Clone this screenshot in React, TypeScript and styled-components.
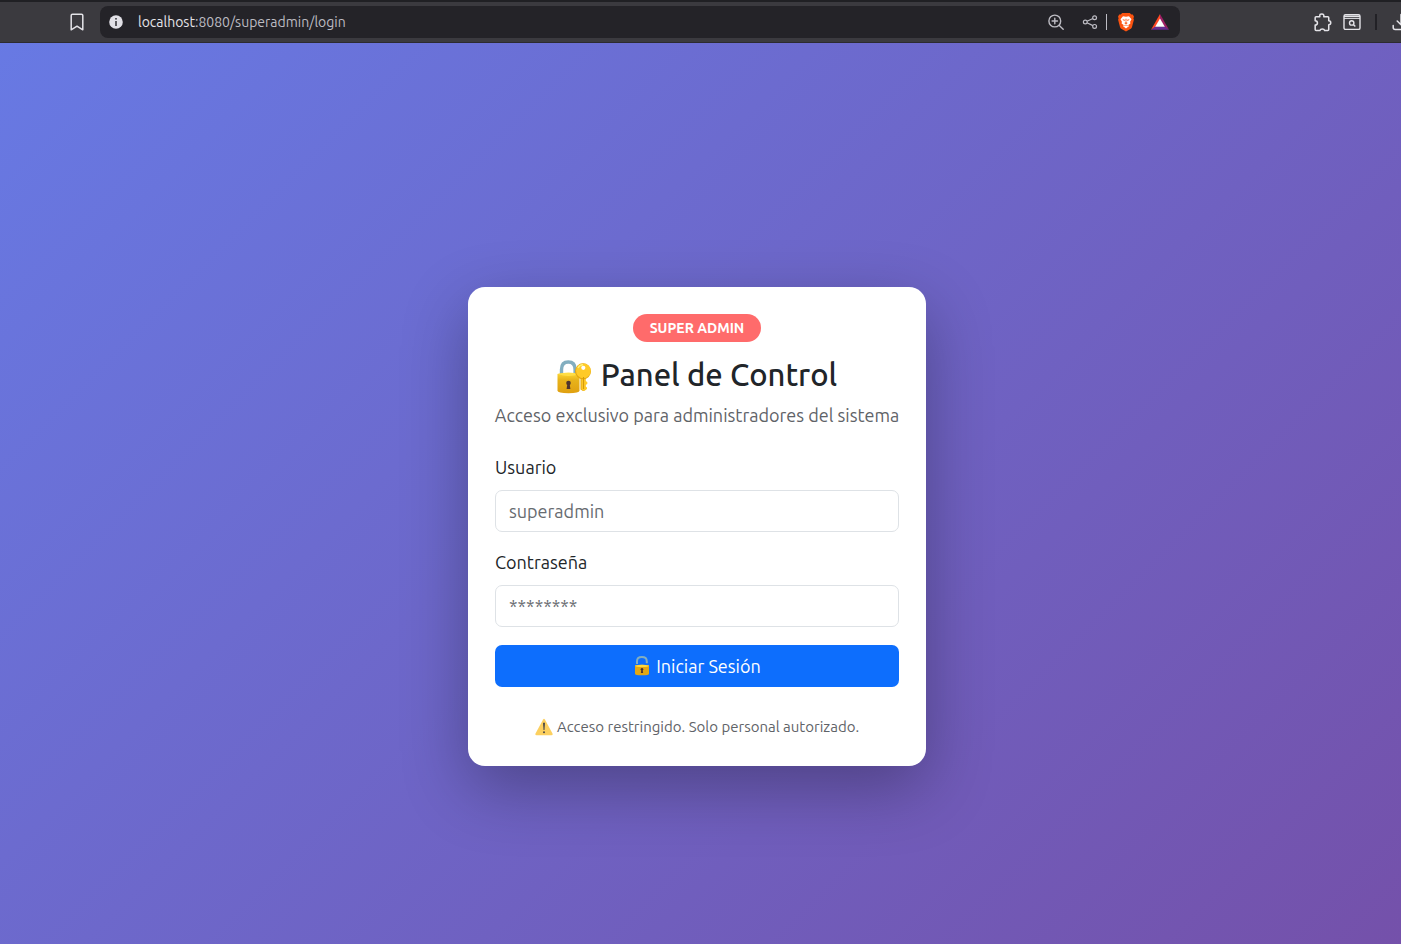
import React from "react";
import styled, { createGlobalStyle } from "styled-components";

const GlobalStyle = createGlobalStyle`
  *, *::before, *::after { box-sizing: border-box; }
  body {
    margin: 0;
    font-family: Ubuntu, "Noto Sans", "Open Sans", sans-serif;
    color: #212529;
  }
`;

const Window = styled.div`
  display: flex;
  flex-direction: column;
  min-height: 100vh;
  overflow: hidden;
`;

const Toolbar = styled.header`
  display: flex;
  align-items: center;
  height: 43px;
  padding-left: 68px;
  border-top: 2px solid #202024;
  border-bottom: 1px solid #2c2b30;
  background: #3b3a3f;
  color: #e4e3e8;
  overflow: hidden;
`;

const IconButton = styled.button<{ $width?: number }>`
  display: flex;
  flex: none;
  align-items: center;
  justify-content: center;
  width: ${(p) => p.$width ?? 18}px;
  height: 20px;
  padding: 0;
  border: 0;
  background: none;
  color: inherit;
  cursor: pointer;

  svg { display: block; flex: none; }
`;

const AddressBar = styled.div`
  display: flex;
  flex: 1;
  align-items: center;
  min-width: 0;
  height: 32px;
  margin-left: 14px;
  padding: 0 11px 0 8px;
  border-radius: 8px;
  background: #242328;
`;

const Url = styled.div`
  flex: 1;
  min-width: 0;
  margin-left: 13px;
  overflow: hidden;
  white-space: nowrap;
  font-size: 14px;
  line-height: 20px;
  color: #bdbcc3;
`;

const Host = styled.span`
  color: #e4e3e8;
`;

const AddressActions = styled.div`
  display: flex;
  align-items: center;
  color: #bdbcc3;
`;

const Gap = styled.span<{ $size: number }>`
  flex: none;
  width: ${(p) => p.$size}px;
`;

const Divider = styled.span<{ $color: string; $width: number }>`
  flex: none;
  width: ${(p) => p.$width}px;
  height: 16px;
  background: ${(p) => p.$color};
`;

const Extensions = styled.div`
  display: flex;
  flex: none;
  align-items: center;
  width: 87px;
  margin-left: 134px;
`;

const Page = styled.main`
  display: flex;
  flex: 1;
  align-items: center;
  justify-content: center;
  padding: 66px 7px 0 0;
  background: linear-gradient(135deg, #667eea 0%, #764ba2 100%) -263px 0 / calc(100% + 519px) calc(100% + 66px);
`;

const Card = styled.section`
  width: 100%;
  max-width: 458px;
  padding: 27px;
  border-radius: 17px;
  background: #fff;
  box-shadow: 0 22px 66px rgba(0, 0, 0, 0.3);
`;

const Heading = styled.div`
  display: flex;
  flex-direction: column;
  align-items: center;
  margin-bottom: 27px;
  text-align: center;
`;

const Badge = styled.span`
  padding: 0 17px;
  border-radius: 22px;
  background: #ff6b6b;
  color: #fff;
  font-size: 14px;
  font-weight: 600;
  line-height: 28px;
`;

const Title = styled.h1`
  display: flex;
  align-items: center;
  gap: 9px;
  margin: 13px 0 9px;
  font-size: 31px;
  font-weight: 500;
  line-height: 39px;
  white-space: nowrap;
`;

const Subtitle = styled.p`
  margin: 0;
  font-size: 18px;
  line-height: 25px;
  color: #5f6368;
  white-space: nowrap;
`;

const Field = styled.div`
  margin-bottom: 18px;
`;

const Label = styled.label`
  display: block;
  margin-bottom: 10px;
  font-size: 18px;
  line-height: 25px;
`;

const TextInput = styled.input`
  display: block;
  width: 100%;
  height: 42px;
  padding: 0 13px 1px;
  border: 1px solid #dee2e6;
  border-radius: 7px;
  background: #fff;
  color: #212529;
  font: inherit;
  font-size: 18px;

  &::placeholder { color: #676b70; opacity: 1; }
`;

const SubmitButton = styled.button`
  display: flex;
  align-items: center;
  justify-content: center;
  gap: 5px;
  width: 100%;
  height: 42px;
  padding: 0 0 1px;
  border: 0;
  border-radius: 7px;
  background: #0d6efd;
  color: #fff;
  font: inherit;
  font-size: 18px;
  cursor: pointer;
`;

const Notice = styled.p`
  display: flex;
  align-items: center;
  justify-content: center;
  gap: 4px;
  margin: 27px 0 0;
  font-size: 15px;
  line-height: 25px;
  color: #5f6368;
  white-space: nowrap;
`;

const BookmarkIcon = () => (
  <svg width="18" height="20" viewBox="0 0 18 20" fill="none" stroke="currentColor" strokeWidth="1.5" strokeLinejoin="round">
    <path d="M4.5 2.2h9q1.3 0 1.3 1.3v14.3L9 14.2l-5.800 3.600V3.500q0-1.300 1.300-1.300Z" />
  </svg>
);

const InfoIcon = () => (
  <svg width="17" height="16" viewBox="0 0 17 16">
    <circle cx="8" cy="8" r="6.800" fill="#e1e0e6" />
    <rect x="7.200" y="4" width="1.600" height="1.600" fill="#3b3a3f" />
    <rect x="7.200" y="7" width="1.600" height="5" fill="#3b3a3f" />
  </svg>
);

const ZoomIcon = () => (
  <svg width="18" height="18" viewBox="0 0 18 18" fill="none" stroke="currentColor" strokeWidth="1.400" strokeLinecap="round">
    <circle cx="7.800" cy="8" r="5.900" />
    <path d="M12.300 12.500l3.900 3.800M7.800 5.300v5.400M5.100 8h5.400" />
  </svg>
);

const ShareIcon = () => (
  <svg width="16" height="16" viewBox="0 0 16 16" fill="none" stroke="currentColor" strokeWidth="1.200">
    <circle cx="3.300" cy="8" r="1.900" />
    <circle cx="12.600" cy="3.700" r="1.900" />
    <circle cx="12.600" cy="12.400" r="1.900" />
    <path d="M5 7.200l5.900-2.700M5 8.800l5.900 2.800" />
  </svg>
);

const BraveIcon = () => (
  <svg width="18" height="20" viewBox="0 0 18 20">
    <path d="M5.200 1h7.600l1.500 1.600 1.500-.1 1.200 2.200-.6 1.500.5 1.500-1.900 7.400q-.3 1-1.200 1.600L9 19.400l-4.800-2.700Q3.300 16.100 3 15.100L1.100 7.700l.5-1.500L1 4.700l1.200-2.200 1.500.1Z" fill="#fb5310" />
    <path d="M6 4.300 9 4.800l3-.5 2.500 3-1.400 2.500.3 1.600-2.400 1.800 1.100.900L9 16.600l-3.100-2.500 1.100-.9-2.400-1.800.3-1.600-1.400-2.500Z" fill="#fff" />
    <path d="M5.300 7.300l2.500.5-.4 1.500Zm7.400 0-2.500.5.400 1.500ZM8.500 6.700h1l-.2 3.600 1.500.8L9 12.300l-1.800-1.200 1.500-.8Z" fill="#fb5310" />
    <path d="M7.200 13.800 9 13l1.800.8" fill="none" stroke="#fb5310" strokeWidth=".7" />
  </svg>
);

const RewardsIcon = () => (
  <svg width="18" height="16" viewBox="0 0 18 16">
    <path d="M9 0v5.600L4.800 12.700 0 15.800Z" fill="#ff4724" />
    <path d="M9 0l9 15.800-4.800-3.100L9 5.600Z" fill="#9e1f63" />
    <path d="M0 15.800l4.300-3.200h9.400l4.300 3.200Z" fill="#662d91" />
    <path d="M9 4.600l4.800 8.200H4.200Z" fill="#fff" />
  </svg>
);

const PuzzleIcon = () => (
  <svg width="18" height="19" viewBox="1.500 0 18.500 20" fill="none" stroke="currentColor" strokeWidth="1.600" strokeLinejoin="round">
    <path d="M3.500 4h3.900C7 1.200 8.100 1 9.500 1s2.500.7 2.100 3h4.300q.9 0 .9.900v3.300c1.500.1 2.100.9 2.100 2.100s-.7 2.100-2.100 2.200v4.900q0 1-1 1h-3.300c-.3-1.100-1.300-1.500-2.500-1.500s-2.200.4-2.500 1.500H3.500q-1 0-1-1v-4.700c1.700-.1 2.400-1.100 2.400-2.300s-.7-2.200-2.400-2.300V5q0-1 1-1Z" />
  </svg>
);

const PanelSearchIcon = () => (
  <svg width="18" height="18" viewBox="0 0 18 18" fill="none" stroke="currentColor" strokeWidth="1.400">
    <rect x="1" y="1.800" width="16" height="14.600" rx="1.500" />
    <path d="M1 3.400h16" strokeWidth="1.400" />
    <path d="M1 5.400h16" strokeWidth="1" />
    <circle cx="8.700" cy="9.900" r="2.200" />
    <path d="M10.300 11.500l2 2" />
  </svg>
);

const DownloadIcon = () => (
  <svg width="18" height="18" viewBox="0 0 18 18" fill="none" stroke="currentColor" strokeWidth="1.500" strokeLinecap="round" strokeLinejoin="round">
    <path d="M9 1.500v10M5.200 8l3.800 3.800L12.800 8M1.200 12.500v2q0 2 2 2h11.600q2 0 2-2v-2" />
  </svg>
);

const LockKeyIcon = () => (
  <svg width="35" height="38" viewBox="1 -3 35 38" aria-hidden="true">
    <defs>
      <linearGradient id="lockBody" x2="0" y2="1">
        <stop offset="0" stopColor="#fdd835" />
        <stop offset=".35" stopColor="#e8b31b" />
        <stop offset="1" stopColor="#e0a010" />
      </linearGradient>
    </defs>
    <path d="M5.500 17v-6.500C5.500 5.500 8 3 12.300 3s6.800 2.500 6.800 7.500V17" fill="none" stroke="#82aec0" strokeWidth="3.400" />
    <path d="M1.500 15Q12.500 12.600 23.500 15V31.500Q23.500 34.300 12.500 34.300T1.500 31.500Z" fill="url(#lockBody)" />
    <path d="M1.500 15Q12.500 12.600 23.500 15Q12.500 19 1.500 15Z" fill="#ffdd45" />
    <circle cx="12.500" cy="24" r="2.300" fill="#4e342e" />
    <path d="M11.500 24h2l.9 6h-3.800Z" fill="#4e342e" />
    <path d="M24.500 19h5v12l-2.400 1-2.600-1.400Z" fill="#e2a610" />
    <path d="M25.500 18h4v4l1.800 1v2l-1.800 1v1.500l1.500 1v1.500l-3 2-2.500-1.500Z" fill="#ffca28" />
    <circle cx="27" cy="12.300" r="8" fill="#e2a610" />
    <circle cx="27.400" cy="11.800" r="7.400" fill="#ffca28" />
    <path d="M22 9q1.500-3 5-3.200" fill="none" stroke="#fff176" strokeWidth="1.400" />
    <circle cx="27.300" cy="8.800" r="2.100" fill="#fff" />
    <path d="M27.500 18v12" stroke="#d59a0a" strokeWidth="1.100" />
  </svg>
);

const OpenLockIcon = () => (
  <svg width="18" height="20" viewBox="0 0 18 20" aria-hidden="true">
    <path d="M4 8V5.400C4 2.500 6 1.100 8.900 1.100s4.900 1.400 4.900 4.300v1.800" fill="none" stroke="#82aec0" strokeWidth="2" />
    <path d="M2 9.500q7-1.700 14 0v8.300q0 1.500-7 1.500t-7-1.500Z" fill="#e3a714" />
    <path d="M2 9.500q7-1.700 14 0-.2 1.600-6.800 1.600T2 9.500Z" fill="#ffd93b" />
    <circle cx="9" cy="13.300" r="1.300" fill="#4e342e" />
    <path d="M8.400 13.500h1.200l.5 3.500H7.900Z" fill="#4e342e" />
  </svg>
);

const WarningIcon = () => (
  <svg width="18" height="18" viewBox="0 0 18 18" aria-hidden="true">
    <path d="M8.100 1.400q.9-1.400 1.800 0l7.600 14.200q.6 1.600-1 1.600h-15q-1.600 0-1-1.600Z" fill="#fcd060" />
    <path d="M8 5q1-1 2 0l-.5 7H8.500Z" fill="#4c4a48" />
    <circle cx="9" cy="14.200" r="1" fill="#4c4a48" />
  </svg>
);

export default function App() {
  return (
    <>
      <GlobalStyle />
      <Window>
        <Toolbar>
          <IconButton aria-label="Bookmark"><BookmarkIcon /></IconButton>
          <AddressBar>
            <IconButton aria-label="Site information" $width={17}><InfoIcon /></IconButton>
            <Url><Host>localhost</Host>:8080/superadmin/login</Url>
            <AddressActions>
              <IconButton aria-label="Zoom"><ZoomIcon /></IconButton>
              <Gap $size={16} />
              <IconButton aria-label="Share"><ShareIcon /></IconButton>
              <Gap $size={7} />
              <Divider $color="#bdbcc3" $width={1} />
              <Gap $size={10} />
              <IconButton aria-label="Shields"><BraveIcon /></IconButton>
              <Gap $size={16} />
              <IconButton aria-label="Rewards"><RewardsIcon /></IconButton>
            </AddressActions>
          </AddressBar>
          <Extensions>
            <IconButton aria-label="Extensions"><PuzzleIcon /></IconButton>
            <Gap $size={11} />
            <IconButton aria-label="Search panel"><PanelSearchIcon /></IconButton>
            <Gap $size={14} />
            <Divider $color="#222126" $width={2} />
            <Gap $size={15} />
            <IconButton aria-label="Downloads"><DownloadIcon /></IconButton>
          </Extensions>
        </Toolbar>
        <Page>
          <Card>
            <Heading>
              <Badge>SUPER ADMIN</Badge>
              <Title><LockKeyIcon />Panel de Control</Title>
              <Subtitle>Acceso exclusivo para administradores del sistema</Subtitle>
            </Heading>
            <form onSubmit={(e) => e.preventDefault()}>
              <Field>
                <Label htmlFor="username">Usuario</Label>
                <TextInput id="username" type="text" placeholder="superadmin" />
              </Field>
              <Field>
                <Label htmlFor="password">Contraseña</Label>
                <TextInput id="password" type="password" placeholder="********" />
              </Field>
              <SubmitButton type="submit"><OpenLockIcon />Iniciar Sesión</SubmitButton>
            </form>
            <Notice><WarningIcon />Acceso restringido. Solo personal autorizado.</Notice>
          </Card>
        </Page>
      </Window>
    </>
  );
}
